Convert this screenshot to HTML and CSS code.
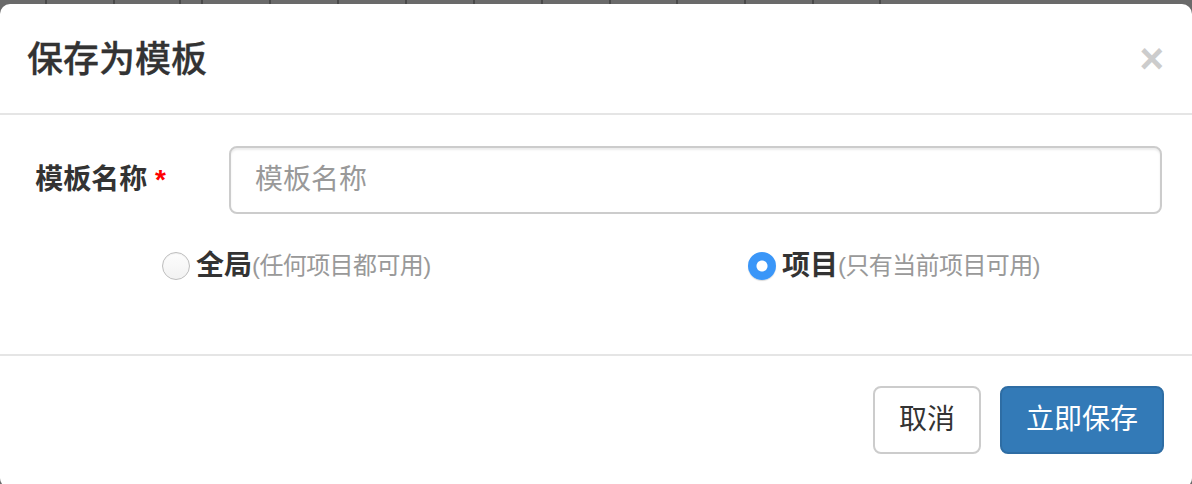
FILE: index.html
```html
<!DOCTYPE html>
<html lang="zh-CN">
<head>
<meta charset="utf-8">
<title>保存为模板</title>
<link rel="stylesheet" href="styles.css">
</head>
<body>
<div class="backdrop-grid">
  <span class="cell w47"></span><span class="cell w68"></span><span class="cell w66"></span><span class="cell w22"></span>
  <span class="cell w68"></span><span class="cell w68"></span><span class="cell w68"></span><span class="cell w68"></span>
  <span class="cell w68"></span><span class="cell w68"></span><span class="cell w67"></span><span class="cell w68"></span>
  <span class="cell w68"></span><span class="cell w67"></span><span class="cell rest"></span>
</div>
<div class="modal">
  <div class="modal-header">
    <h4 class="modal-title">保存为模板</h4>
    <button class="close" type="button">×</button>
  </div>
  <div class="modal-body">
    <div class="form-row">
      <label class="field-label">模板名称 <span class="req">*</span></label>
      <input class="field-input" type="text" placeholder="模板名称">
    </div>
    <div class="radio-row">
      <label class="radio-item">
        <span class="radio"></span>
        <span class="radio-name">全局</span><span class="radio-hint">(任何项目都可用)</span>
      </label>
      <label class="radio-item">
        <span class="radio checked"></span>
        <span class="radio-name">项目</span><span class="radio-hint">(只有当前项目可用)</span>
      </label>
    </div>
  </div>
  <div class="modal-footer">
    <button class="btn btn-default" type="button">取消</button>
    <button class="btn btn-primary" type="button">立即保存</button>
  </div>
</div>
</body>
</html>
```

FILE: styles.css
```css
* { box-sizing: border-box; }

html, body {
  margin: 0;
  padding: 0;
  height: 484px;
  overflow: hidden;
}

body {
  background: #6a6a6a;
  font-family: "Liberation Sans", "Noto Sans CJK SC", sans-serif;
  color: #333;
}

.backdrop-grid {
  display: flex;
  height: 4px;
}

.cell {
  flex: none;
  height: 4px;
  border-right: 2px solid #4a4a4a;
}
.w22 { width: 22px; }
.w47 { width: 47px; }
.w66 { width: 66px; }
.w67 { width: 67px; }
.w68 { width: 68px; }
.rest { flex: 1; border-right: none; }

.modal {
  width: 1192px;
  height: 484px;
  background: #fff;
  border-radius: 10px;
  overflow: hidden;
}

.modal-header {
  display: flex;
  align-items: flex-start;
  justify-content: space-between;
  padding: 30px 28px 28px 27px;
  border-bottom: 2px solid #e5e5e5;
}

.modal-title {
  margin: 0;
  font-size: 36px;
  line-height: 51px;
  font-weight: 500;
  color: #333;
  -webkit-text-stroke: 0.3px #333;
}

.close {
  border: 0;
  background: transparent;
  padding: 0;
  margin-top: 4px;
  font-family: "Liberation Sans", sans-serif;
  font-size: 42px;
  line-height: 42px;
  font-weight: 700;
  color: #cccccc;
  cursor: pointer;
}

.modal-body {
  padding: 31px 30px 30px;
  height: 239px;
}

.form-row {
  display: flex;
  align-items: center;
  gap: 63px;
}

.field-label {
  flex: none;
  width: 136px;
  text-align: right;
  font-size: 28px;
  font-weight: 700;
  line-height: 40px;
  color: #333;
}

.req {
  color: #f00;
}

.field-input {
  flex: 1;
  height: 68px;
  padding: 12px 24px;
  border: 2px solid #ccc;
  border-radius: 8px;
  font-family: "Liberation Sans", "Noto Sans CJK SC", sans-serif;
  font-size: 28px;
  color: #555;
  box-shadow: inset 0 2px 2px rgba(0,0,0,0.075);
  outline: none;
}
.field-input::placeholder {
  color: #999;
}

.radio-row {
  display: flex;
  margin-top: 32px;
  padding-left: 132px;
}

.radio-item {
  display: flex;
  align-items: center;
  flex: none;
  line-height: 40px;
}

.radio-item:first-child {
  width: 586px;
}

.radio {
  flex: none;
  width: 28px;
  height: 28px;
  margin-right: 6px;
  border-radius: 50%;
  border: 1.5px solid #bdbdbd;
  background: linear-gradient(#fdfdfd, #f2f2f2);
  box-shadow: inset 0 1px 1px rgba(0,0,0,0.05);
}

.radio.checked {
  border: 0;
  background: radial-gradient(circle, #fff 0, #fff 5px, #3a96f8 6px);
  box-shadow: 0 1px 1px rgba(0,0,0,0.15);
}

.radio-name {
  font-size: 28px;
  font-weight: 700;
  color: #333;
}

.radio-hint {
  font-size: 24px;
  letter-spacing: -0.6px;
  color: #999;
}

.modal-footer {
  display: flex;
  justify-content: flex-end;
  gap: 19px;
  padding: 30px 28px 30px;
  border-top: 2px solid #e5e5e5;
}

.btn {
  height: 68px;
  padding: 12px 24px;
  font-family: "Liberation Sans", "Noto Sans CJK SC", sans-serif;
  font-size: 28px;
  line-height: 40px;
  border-radius: 8px;
  border: 2px solid transparent;
  cursor: pointer;
}

.btn-default {
  background: #fff;
  border-color: #ccc;
  color: #333;
}

.btn-primary {
  background: #337ab7;
  border-color: #2e6da4;
  color: #fff;
}
```
